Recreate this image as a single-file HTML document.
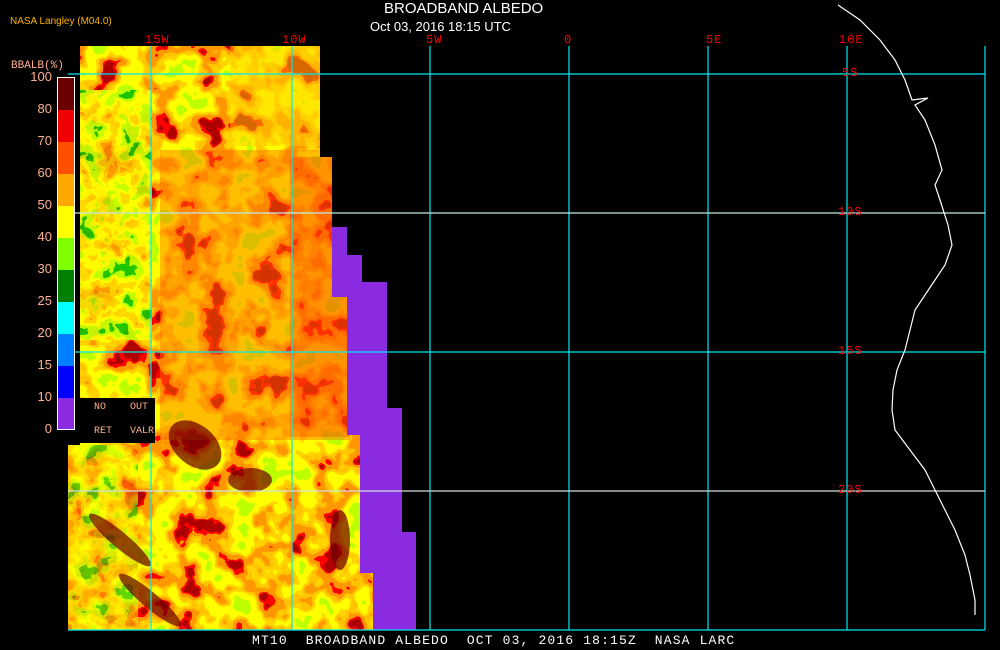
<!DOCTYPE html><html><head><style>
body{margin:0;background:#000;width:1000px;height:650px;overflow:hidden;position:relative;font-family:"Liberation Sans",sans-serif}
.t{position:absolute;white-space:pre}
.m{font-family:"Liberation Mono",monospace}
.r{color:#f00;font-size:12px;letter-spacing:1px}
</style></head><body>
<svg width="1000" height="650" style="position:absolute;left:0;top:0">
<defs>
<filter id="n1" x="0" y="0" width="100%" height="100%">
<feTurbulence type="fractalNoise" baseFrequency="0.035" numOctaves="3" seed="3"/>
<feColorMatrix type="matrix" values="2 0 0 0 -0.5  2 0 0 0 -0.5  2 0 0 0 -0.5  0 0 0 0 1"/>
<feComponentTransfer>
<feFuncR type="discrete" tableValues="0.42 1 1 1 1 1 1 1 1 0.5"/>
<feFuncG type="discrete" tableValues="0 0 0.31 0.31 0.55 0.66 1 1 1 1"/>
<feFuncB type="discrete" tableValues="0"/>
<feFuncA type="discrete" tableValues="1"/>
</feComponentTransfer></filter>
<filter id="n2" x="0" y="0" width="100%" height="100%">
<feTurbulence type="fractalNoise" baseFrequency="0.05" numOctaves="3" seed="7"/>
<feColorMatrix type="matrix" values="2 0 0 0 -0.5  2 0 0 0 -0.5  2 0 0 0 -0.5  0 0 0 0 1"/>
<feComponentTransfer>
<feFuncR type="discrete" tableValues="0 0.5 0.5 1 1 1 1 1"/>
<feFuncG type="discrete" tableValues="0.5 1 1 1 1 0.66 0.66 0.31"/>
<feFuncB type="discrete" tableValues="0"/>
<feFuncA type="discrete" tableValues="1"/>
</feComponentTransfer></filter>
<clipPath id="dc"><polygon points="80,46 320,46 320,157 332,157 332,227 347,227 347,435 360,435 360,573 373,573 373,630 68,630 68,445 80,445"/></clipPath>
</defs>
<g clip-path="url(#dc)">
<rect x="60" y="40" width="320" height="600" filter="url(#n1)"/>
<rect x="80" y="90" width="72" height="250" filter="url(#n2)" opacity="0.85"/>
<rect x="68" y="445" width="70" height="185" filter="url(#n2)" opacity="0.6"/>
<rect x="230" y="46" width="90" height="100" fill="#ffd000" opacity="0.5"/>
<rect x="160" y="150" width="190" height="290" fill="#ff7000" opacity="0.45"/>
<rect x="290" y="157" width="60" height="280" fill="#ff3000" opacity="0.3"/>
<g fill="#6b0000" opacity="0.7">
<ellipse cx="195" cy="445" rx="30" ry="20" transform="rotate(40 195 445)"/>
<ellipse cx="250" cy="480" rx="22" ry="12"/>
<ellipse cx="340" cy="540" rx="10" ry="30"/>
<ellipse cx="120" cy="540" rx="40" ry="8" transform="rotate(40 120 540)"/>
<ellipse cx="150" cy="600" rx="40" ry="8" transform="rotate(40 150 600)"/>
</g>
</g>
<polygon fill="#8a2be2" points="332,227 347,227 347,255 362,255 362,282 387,282 387,408 402,408 402,532 416,532 416,630 373,630 373,573 360,573 360,435 347,435 347,297 332,297"/>
<g stroke="#00e8f0" stroke-width="1.2" fill="none">
<line x1="151" y1="46" x2="151" y2="630"/><line x1="292" y1="46" x2="292" y2="630"/>
<line x1="430" y1="46" x2="430" y2="630"/><line x1="569" y1="46" x2="569" y2="630"/>
<line x1="708" y1="46" x2="708" y2="630"/><line x1="847" y1="46" x2="847" y2="630"/>
<line x1="985" y1="46" x2="985" y2="630"/>
<line x1="68" y1="74" x2="985" y2="74"/><line x1="68" y1="213" x2="985" y2="213" stroke="#c0e8e8"/>
<line x1="68" y1="352" x2="985" y2="352"/><line x1="68" y1="491" x2="985" y2="491" stroke="#d0e0e0"/>
<line x1="68" y1="630" x2="985" y2="630"/>
</g>
<polyline fill="none" stroke="#fff" stroke-width="1.2" points="838,5 860,20 880,40 895,60 905,80 912,100 928,98 915,105 925,120 935,145 942,170 935,185 940,200 948,225 952,245 945,265 935,280 925,295 915,310 910,330 905,350 897,370 893,390 892,410 895,430 910,450 925,470 935,490 945,510 955,530 965,555 970,575 975,600 975,615"/>
<rect x="57" y="77" width="18" height="353" fill="#fff"/>
<g>
<rect x="58" y="78" width="16" height="32" fill="#6b0000"/><rect x="58" y="110" width="16" height="32" fill="#f00000"/>
<rect x="58" y="142" width="16" height="32" fill="#ff5000"/><rect x="58" y="174" width="16" height="32" fill="#ffa800"/>
<rect x="58" y="206" width="16" height="32" fill="#ffff00"/><rect x="58" y="238" width="16" height="32" fill="#80ff00"/>
<rect x="58" y="270" width="16" height="32" fill="#008000"/><rect x="58" y="302" width="16" height="32" fill="#00ffff"/>
<rect x="58" y="334" width="16" height="32" fill="#0080ff"/><rect x="58" y="366" width="16" height="32" fill="#0000ff"/>
<rect x="58" y="398" width="16" height="31" fill="#8a2be2"/>
</g>
<rect x="76" y="398" width="79" height="45" fill="#000"/>
</svg>
<div class="t" style="left:384px;top:0px;color:#fff;font-size:15px">BROADBAND ALBEDO</div>
<div class="t" style="left:370px;top:19px;color:#fff;font-size:13px">Oct 03, 2016 18:15 UTC</div>
<div class="t" style="left:10px;top:16px;color:#ffb000;font-size:10px">NASA Langley (M04.0)</div>
<div class="t m" style="left:11px;top:60px;color:#ffb090;font-size:11px">BBALB(%)</div>
<div class="t m r" style="left:145px;top:33px">15W</div>
<div class="t m r" style="left:282px;top:33px">10W</div>
<div class="t m r" style="left:426px;top:33px">5W</div>
<div class="t m r" style="left:564px;top:33px">0</div>
<div class="t m r" style="left:706px;top:33px">5E</div>
<div class="t m r" style="left:839px;top:33px">10E</div>
<div class="t m r" style="left:842px;top:66px">5S</div>
<div class="t m r" style="left:838px;top:205px">10S</div>
<div class="t m r" style="left:838px;top:344px">15S</div>
<div class="t m r" style="left:838px;top:483px">20S</div>
<div style="position:absolute;left:0;top:61px;width:52px;color:#ffb090;font-size:13px;text-align:right;line-height:32px">100<br>80<br>70<br>60<br>50<br>40<br>30<br>25<br>20<br>15<br>10<br>0</div>
<div class="t m" style="left:94px;top:402px;color:#ffb090;font-size:10px">NO    OUT</div>
<div class="t m" style="left:94px;top:426px;color:#ffb090;font-size:10px">RET   VALR</div>
<div class="t m" style="left:252px;top:633px;color:#fff;font-size:13px;letter-spacing:1.15px">MT10  BROADBAND ALBEDO  OCT 03, 2016 18:15Z  NASA LARC</div>
</body></html>
